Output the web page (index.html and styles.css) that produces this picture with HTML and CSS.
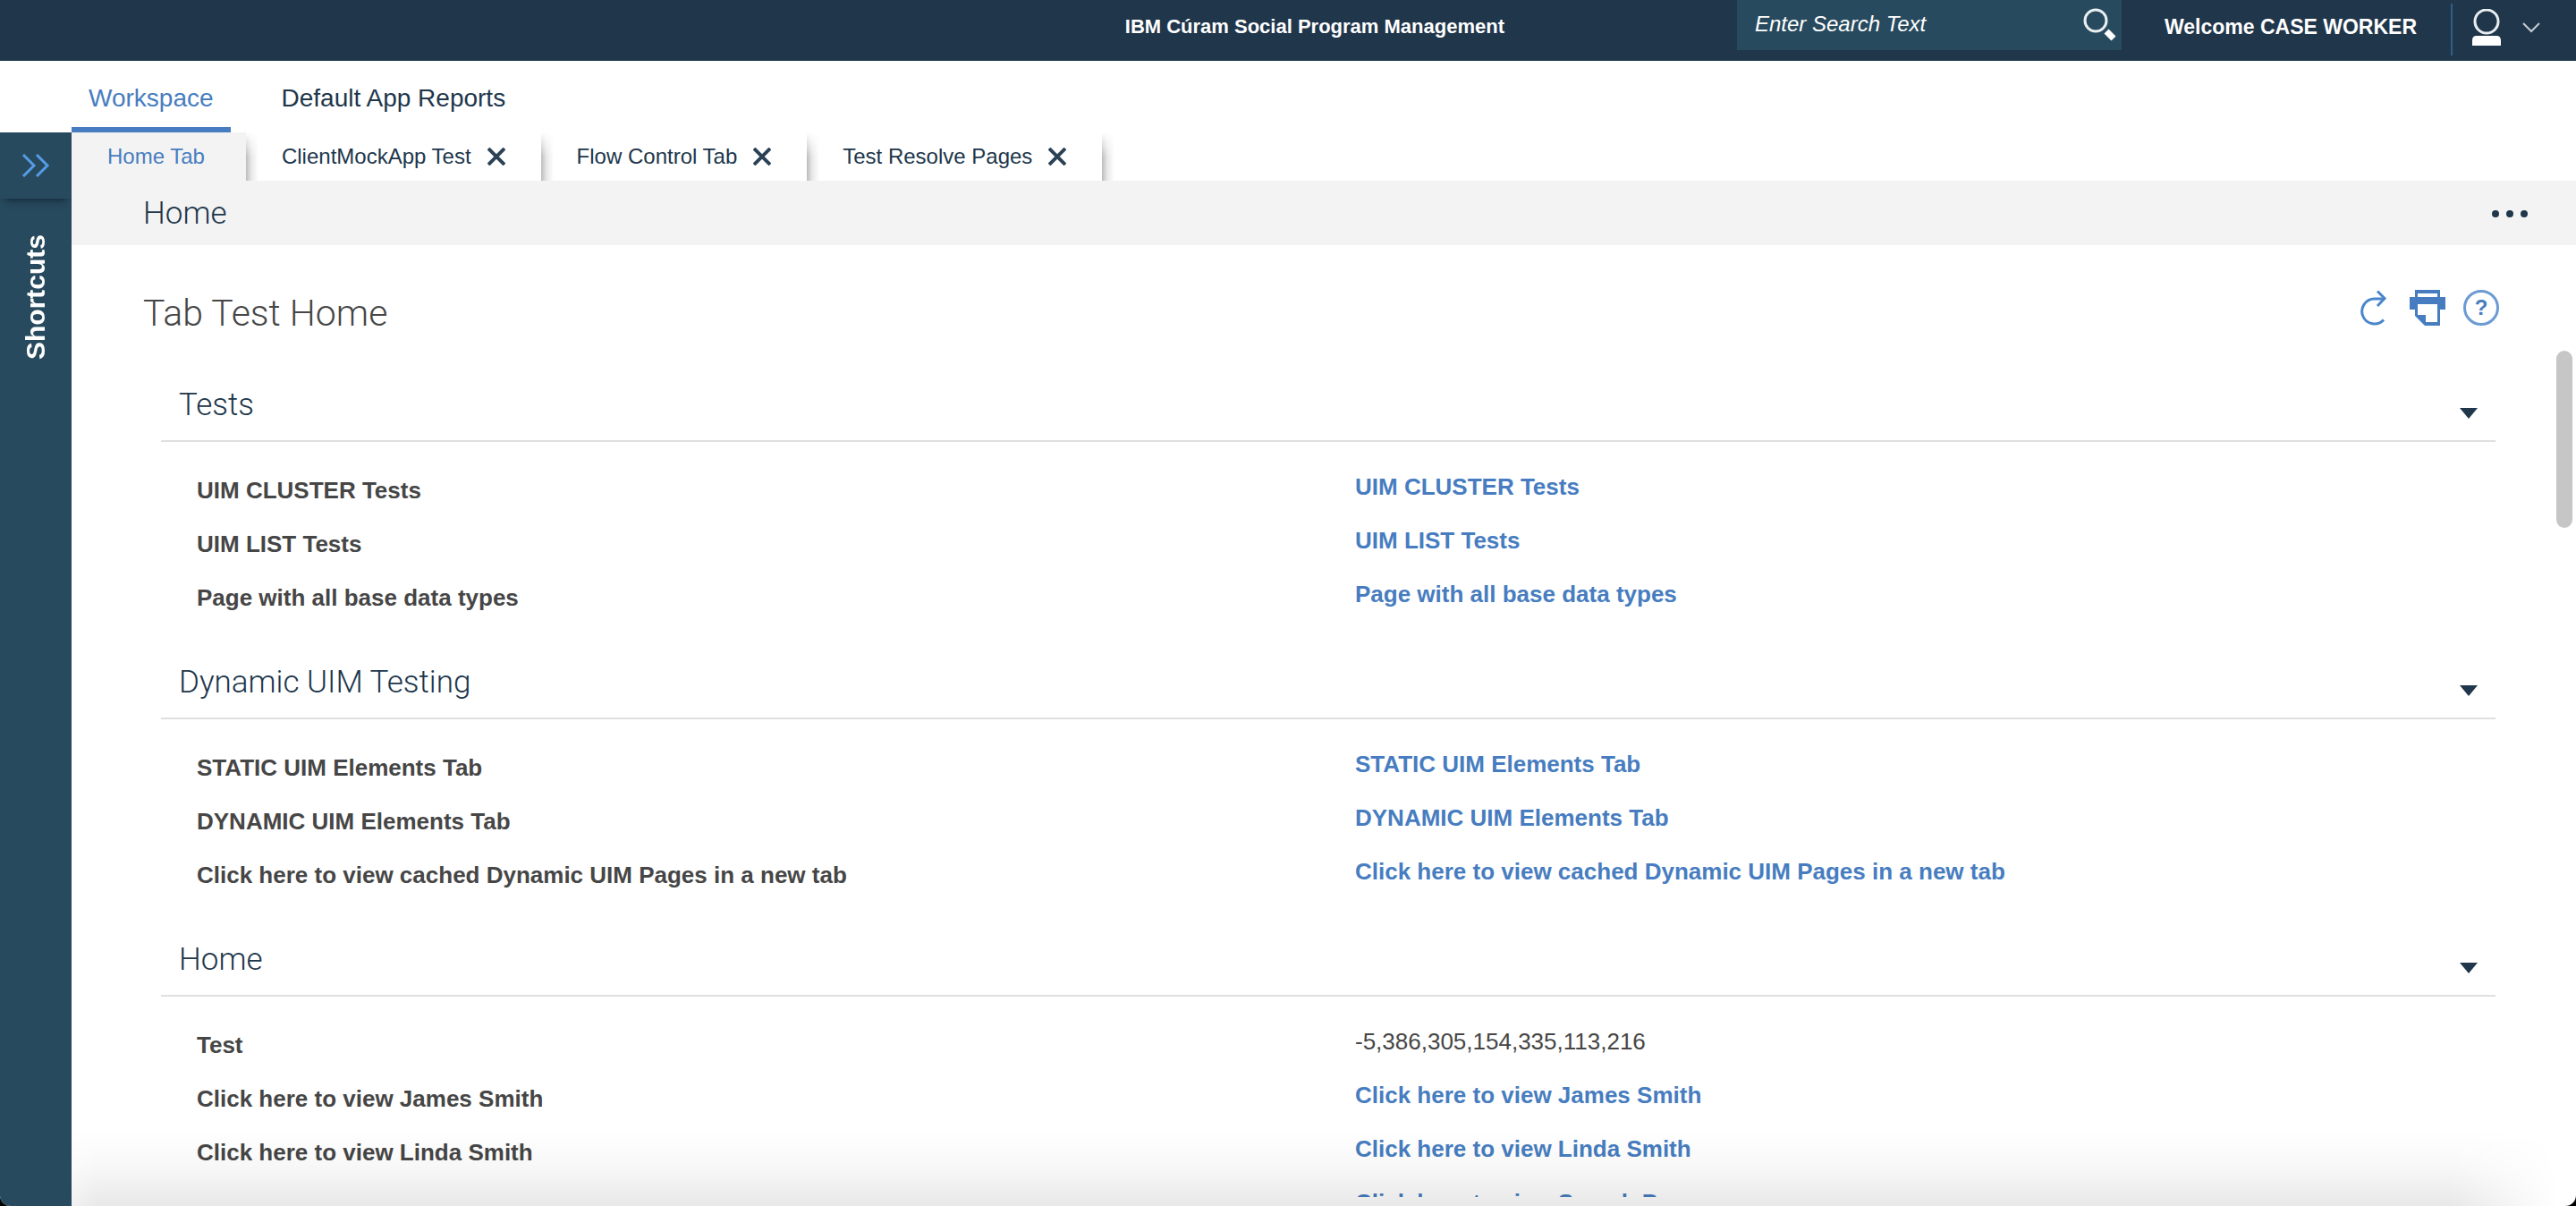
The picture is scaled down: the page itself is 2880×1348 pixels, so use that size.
FILE: index.html
```html
<!DOCTYPE html>
<html lang="en">
<head>
<meta charset="utf-8">
<title>IBM Cúram Social Program Management</title>
<link rel="stylesheet" href="styles.css">
</head>
<body>
<header class="banner">
  <p class="banner-title">IBM Cúram Social Program Management</p>
  <form class="search" role="search">
    <input class="search-input" type="text" placeholder="Enter Search Text" aria-label="Enter Search Text">
    <button class="search-button" type="button" aria-label="Search">
      <svg width="40" height="40" viewBox="0 0 40 40" fill="none" stroke="#e9eef1">
        <circle cx="15" cy="15" r="12" stroke-width="3"/>
        <path d="M27 27l8 8" stroke="#fff" stroke-width="7"/>
      </svg>
    </button>
  </form>
  <p class="welcome">Welcome CASE WORKER</p>
  <button class="user-menu" type="button" aria-label="User menu">
    <svg width="32" height="42" viewBox="0 0 32 42" fill="none">
      <circle cx="16" cy="14" r="13" stroke="#e9eef1" stroke-width="3"/>
      <path d="M0 41v-6q0-5 5-5h22q5 0 5 5v6z" fill="#fff"/>
    </svg>
    <svg width="20" height="12" viewBox="0 0 20 12" fill="none" stroke="#c3ccd3" stroke-width="2"><path d="M1 1l9 9 9-9"/></svg>
  </button>
</header>
<nav class="sections" aria-label="Sections">
  <a class="section-link current" href="#workspace">Workspace</a>
  <a class="section-link" href="#reports">Default App Reports</a>
</nav>
<div class="workspace">
  <aside class="sidebar">
    <button class="sidebar-toggle" type="button" aria-label="Expand shortcuts">
      <svg width="32" height="26" viewBox="0 0 32 26" fill="none" stroke="#549ce6" stroke-width="3"><path d="M2 1l12 12L2 25M17 1l12 12-12 12"/></svg>
    </button>
    <a class="shortcuts" href="#shortcuts">Shortcuts</a>
  </aside>
  <main class="main">
    <div class="tabs">
      <div class="tab active"><a class="tab-link" href="#home">Home Tab</a></div>
      <div class="tab">
        <a class="tab-link" href="#client">ClientMockApp Test</a>
        <button class="tab-close" type="button" aria-label="Close ClientMockApp Test"><svg width="20" height="20" viewBox="0 0 20 20" stroke="#2b4256" stroke-width="4"><path d="M1 1l18 18M19 1L1 19"/></svg></button>
      </div>
      <div class="tab">
        <a class="tab-link" href="#flow">Flow Control Tab</a>
        <button class="tab-close" type="button" aria-label="Close Flow Control Tab"><svg width="20" height="20" viewBox="0 0 20 20" stroke="#2b4256" stroke-width="4"><path d="M1 1l18 18M19 1L1 19"/></svg></button>
      </div>
      <div class="tab">
        <a class="tab-link" href="#resolve">Test Resolve Pages</a>
        <button class="tab-close" type="button" aria-label="Close Test Resolve Pages"><svg width="20" height="20" viewBox="0 0 20 20" stroke="#2b4256" stroke-width="4"><path d="M1 1l18 18M19 1L1 19"/></svg></button>
      </div>
      <div class="tabs-end"></div>
    </div>
    <div class="context-bar">
      <h1 class="context-title">Home</h1>
      <button class="more" type="button" aria-label="More actions">
        <svg width="40" height="10" viewBox="0 0 40 10" fill="#20364b"><circle cx="4" cy="5" r="4"/><circle cx="20" cy="5" r="4"/><circle cx="36" cy="5" r="4"/></svg>
      </button>
    </div>
    <div class="page">
      <div class="page-header">
        <h2 class="page-title">Tab Test Home</h2>
        <div class="page-actions">
          <button class="action" type="button" aria-label="Refresh">
            <svg width="40" height="40" viewBox="0 0 40 40" fill="none" stroke="#4a86cb" stroke-width="3"><path d="M32 10H21A14 14 0 1 0 31 33.500"/><path d="M24 1.500l8 8-8 8.500"/></svg>
          </button>
          <button class="action" type="button" aria-label="Print">
            <svg width="40" height="40" viewBox="0 0 40 40" fill="#477dc0" fill-rule="evenodd"><path d="M6 0H34V8H40V22H34V40H17L6 29V22H0V8H6ZM9 4V8H31V4ZM9 16V28H18V36H31V16Z"/></svg>
          </button>
          <button class="action help" type="button" aria-label="Help">?</button>
        </div>
      </div>

      <section class="cluster">
        <div class="cluster-head">
          <h3 class="cluster-title">Tests</h3>
          <button class="collapse" type="button" aria-label="Collapse Tests"></button>
        </div>
        <table class="fields">
          <tr><th scope="row">UIM CLUSTER Tests</th><td><a href="#t1">UIM CLUSTER Tests</a></td></tr>
          <tr><th scope="row">UIM LIST Tests</th><td><a href="#t2">UIM LIST Tests</a></td></tr>
          <tr><th scope="row">Page with all base data types</th><td><a href="#t3">Page with all base data types</a></td></tr>
        </table>
      </section>

      <section class="cluster">
        <div class="cluster-head">
          <h3 class="cluster-title">Dynamic UIM Testing</h3>
          <button class="collapse" type="button" aria-label="Collapse Dynamic UIM Testing"></button>
        </div>
        <table class="fields">
          <tr><th scope="row">STATIC UIM Elements Tab</th><td><a href="#d1">STATIC UIM Elements Tab</a></td></tr>
          <tr><th scope="row">DYNAMIC UIM Elements Tab</th><td><a href="#d2">DYNAMIC UIM Elements Tab</a></td></tr>
          <tr><th scope="row">Click here to view cached Dynamic UIM Pages in a new tab</th><td><a href="#d3">Click here to view cached Dynamic UIM Pages in a new tab</a></td></tr>
        </table>
      </section>

      <section class="cluster">
        <div class="cluster-head">
          <h3 class="cluster-title">Home</h3>
          <button class="collapse" type="button" aria-label="Collapse Home"></button>
        </div>
        <table class="fields">
          <tr><th scope="row">Test</th><td>-5,386,305,154,335,113,216</td></tr>
          <tr><th scope="row">Click here to view James Smith</th><td><a href="#h1">Click here to view James Smith</a></td></tr>
          <tr><th scope="row">Click here to view Linda Smith</th><td><a href="#h2">Click here to view Linda Smith</a></td></tr>
          <tr><th scope="row">Click here to view Search Person</th><td><a href="#h3">Click here to view Search Person</a></td></tr>
        </table>
      </section>
    </div>
    <div class="bottom-shade"></div>
    <div class="scroll-thumb"></div>
  </main>
</div>
</body>
</html>
```

FILE: styles.css
```css
:root {
  --navy: #20364b;
  --teal: #284a5e;
  --blue: #477dc0;
  --grey: #f3f3f3;
  --text: #464646;
}

* { box-sizing: border-box; }

html { background: #000; }

body {
  display: flex;
  flex-direction: column;
  height: 100vh;
  margin: 0;
  overflow: hidden;
  background: #fff;
  border-radius: 0 0 12px 12px;
  color: var(--text);
  font-family: "Liberation Sans", Arial, sans-serif;
  font-size: 26px;
}

h1, h2, h3, p { margin: 0; }
a { color: inherit; text-decoration: none; }

button {
  display: flex;
  align-items: center;
  justify-content: center;
  margin: 0;
  padding: 0;
  border: 0;
  background: none;
  font: inherit;
}

svg { display: block; }

/* Banner */
.banner {
  display: flex;
  flex: none;
  align-items: flex-start;
  height: 68px;
  padding-right: 40px;
  background: var(--navy);
  color: #fff;
}

.banner-title {
  margin: 0 260px 0 auto;
  font-size: 22px;
  font-weight: bold;
  line-height: 60px;
}

.search {
  display: flex;
  align-items: center;
  width: 430px;
  height: 56px;
  padding-right: 4px;
  background: var(--teal);
}

.search-input {
  flex: 1;
  min-width: 0;
  height: 56px;
  padding: 0 0 2px 20px;
  border: 0;
  background: none;
  color: #fff;
  font: italic 24px "Liberation Sans", Arial, sans-serif;
}

.search-input::placeholder { color: #fff; opacity: 1; }

.welcome {
  margin-left: 48px;
  font-size: 23px;
  font-weight: bold;
  line-height: 60px;
}

.user-menu {
  gap: 24px;
  height: 58px;
  margin: 4px 0 0 38px;
  padding: 0 0 4px 22px;
  border-left: 2px solid #2f5f87;
}

/* Section links */
.sections {
  display: flex;
  flex: none;
  gap: 38px;
  height: 80px;
  padding-left: 80px;
}

.section-link {
  padding: 0 19px;
  border-bottom: 6px solid transparent;
  color: var(--navy);
  font-size: 28px;
  line-height: 84px;
}

.section-link.current {
  border-color: var(--blue);
  color: var(--blue);
}

/* Sidebar */
.workspace {
  display: flex;
  flex: 1;
  min-height: 0;
}

.sidebar {
  display: flex;
  flex: none;
  flex-direction: column;
  width: 80px;
  background: var(--teal);
}

.sidebar-toggle {
  height: 74px;
  box-shadow: 0 8px 8px -6px rgba(10, 25, 40, .7);
}

.shortcuts {
  align-self: center;
  margin-top: 40px;
  color: #fff;
  font-size: 30px;
  font-weight: bold;
  line-height: 36px;
  writing-mode: vertical-rl;
  transform: rotate(180deg);
}

/* Tabs */
.main {
  position: relative;
  display: flex;
  flex: 1;
  flex-direction: column;
  min-width: 0;
  padding-bottom: 10px;
}

.tabs {
  display: flex;
  flex: none;
  height: 54px;
  overflow: hidden;
}

.tab {
  display: flex;
  align-items: center;
  gap: 18px;
  padding: 0 40px;
  color: var(--navy);
  font-size: 24px;
  line-height: 54px;
}

.tab.active {
  padding-right: 46px;
  background: var(--grey);
  color: var(--blue);
}

.tab + .tab,
.tabs-end {
  background: linear-gradient(#fff, rgba(255, 255, 255, 0) 28px), linear-gradient(90deg, #bcbcbc, #e8e8e8 6px, #fff 14px);
}

.tabs-end { width: 20px; }

/* Context bar */
.context-bar {
  display: flex;
  flex: none;
  align-items: center;
  justify-content: space-between;
  height: 72px;
  padding: 2px 54px 0 80px;
  background: var(--grey);
}

.context-title,
.cluster-title {
  color: var(--navy);
  font-family: Roboto, "Liberation Sans", sans-serif;
  font-size: 35px;
  font-weight: 300;
  line-height: 42px;
}

/* Page */
.page {
  flex: 1;
  min-height: 0;
  padding: 50px 90px 0 100px;
  overflow: hidden;
}

.page-header {
  display: flex;
  align-items: flex-start;
  justify-content: space-between;
  padding: 0 0 12px;
}

.page-title {
  margin-left: -20px;
  font-family: Roboto, "Liberation Sans", sans-serif;
  font-size: 41px;
  font-weight: 300;
  line-height: 52px;
}

.page-actions {
  display: flex;
  gap: 20px;
  margin-right: -4px;
}

.help {
  width: 40px;
  height: 40px;
  border: 3px solid #6c9ad2;
  border-radius: 50%;
  color: var(--blue);
  font-size: 24px;
  font-weight: bold;
}

/* Clusters */
.cluster-head {
  display: flex;
  align-items: flex-end;
  justify-content: space-between;
  padding: 44px 20px 18px;
  border-bottom: 2px solid #dfdfdf;
}

.collapse { height: 24px; }

.collapse::before {
  content: "";
  border: 10px solid transparent;
  border-top: 12px solid var(--navy);
  border-bottom: 0;
}

.fields {
  width: 100%;
  padding: 24px 0 0 20px;
  border-spacing: 0;
  table-layout: fixed;
}

.fields th,
.fields td {
  height: 60px;
  padding: 0 20px;
  line-height: 32px;
  text-align: left;
}

.fields td { padding-bottom: 8px; }

.fields a {
  color: var(--blue);
  font-weight: bold;
}

/* Overlays */
.bottom-shade {
  position: absolute;
  right: 0;
  bottom: 0;
  left: 0;
  height: 84px;
  background: linear-gradient(rgba(0, 0, 0, 0), rgba(0, 0, 0, .03) 50%, rgba(0, 0, 0, .09));
  mask-image: linear-gradient(90deg, rgba(0, 0, 0, .6), #000 30px, #000 calc(100% - 140px), transparent calc(100% - 20px));
  pointer-events: none;
}

.scroll-thumb {
  position: absolute;
  top: 244px;
  right: 4px;
  width: 18px;
  height: 198px;
  border-radius: 9px;
  background: #c6c6c6;
}
```
